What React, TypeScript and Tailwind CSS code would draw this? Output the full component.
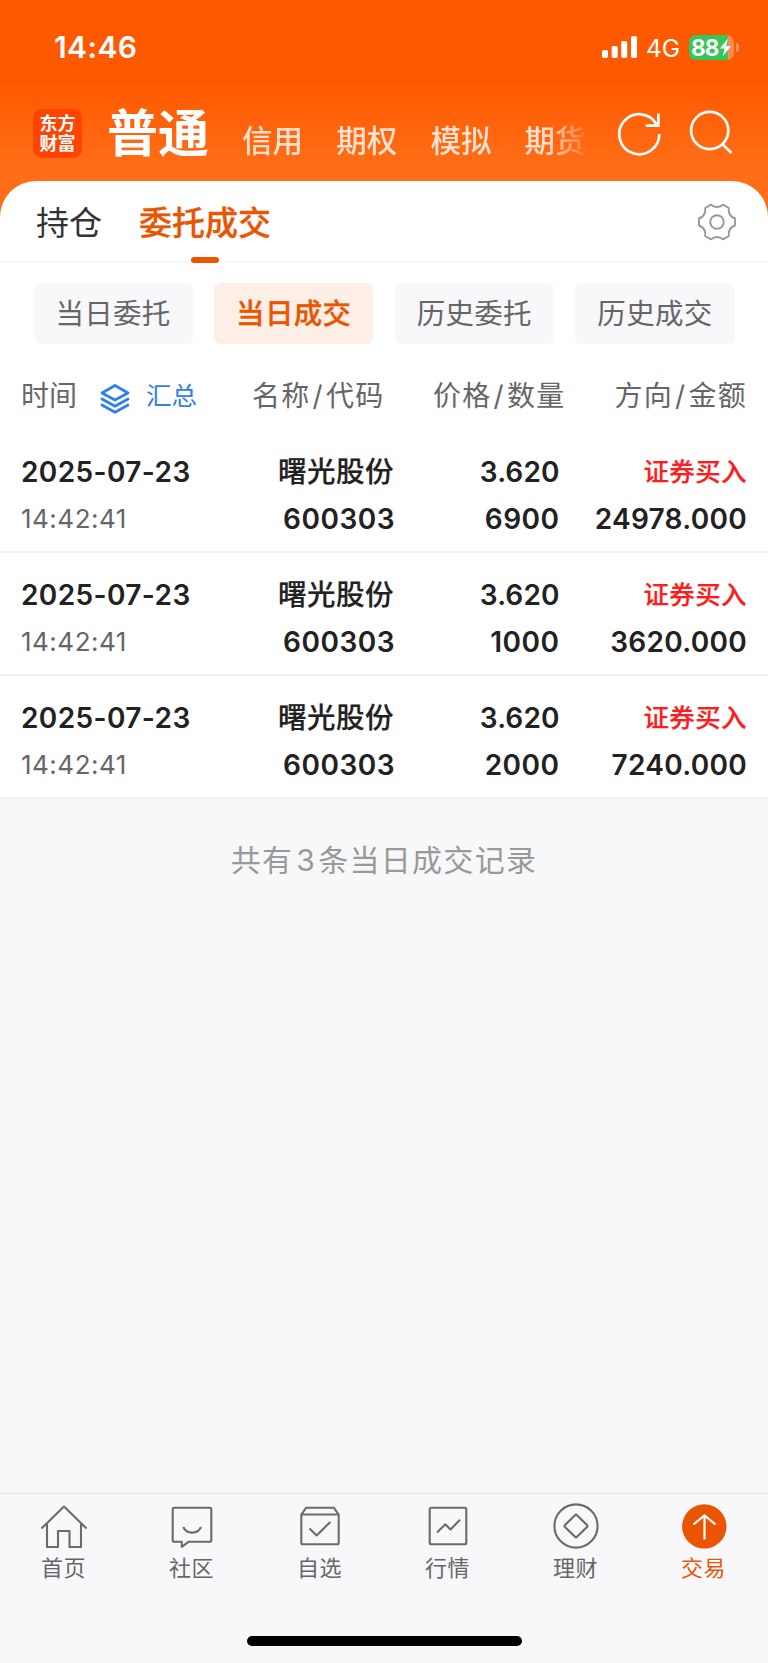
import React from 'react';
import clsx from 'clsx';

interface Trade {
  date: string;
  time: string;
  name: string;
  code: string;
  price: string;
  quantity: string;
  side: string;
  amount: string;
}

const accounts = ['信用', '期权', '模拟', '期货'];

const filters = ['当日委托', '当日成交', '历史委托', '历史成交'];

const columns = [
  ['名称', '代码'],
  ['价格', '数量'],
  ['方向', '金额'],
];

const trades: Trade[] = [
  { date: '2025-07-23', time: '14:42:41', name: '曙光股份', code: '600303', price: '3.620', quantity: '6900', side: '证券买入', amount: '24978.000' },
  { date: '2025-07-23', time: '14:42:41', name: '曙光股份', code: '600303', price: '3.620', quantity: '1000', side: '证券买入', amount: '3620.000' },
  { date: '2025-07-23', time: '14:42:41', name: '曙光股份', code: '600303', price: '3.620', quantity: '2000', side: '证券买入', amount: '7240.000' },
];

const StatusBar: React.FC = () => (
  <div className="flex h-[95px] items-start justify-between pt-[29px] pr-[29px] pl-[54px] text-white">
    <span className="text-[30px] leading-[36px] font-semibold tracking-[0.4px]">14:46</span>
    <div className="flex h-[36px] items-center">
      <svg className="h-[22px] w-[35px]" viewBox="0 0 35 22" fill="currentColor">
        <rect x="0" y="14" width="6" height="8" rx="1.8" />
        <rect x="9.7" y="10" width="6" height="12" rx="1.8" />
        <rect x="19.2" y="5" width="6" height="17" rx="1.8" />
        <rect x="29" y="0" width="6" height="22" rx="1.8" />
      </svg>
      <span className="ml-[9px] w-[43px] pt-[3px] text-[24.5px] leading-[33px]">4G</span>
      <div className="relative h-[25px] w-[45px]">
        <div className="h-full w-full rounded-[7px] bg-[linear-gradient(to_right,#34c759_39px,#ff8a4d_39px)]" />
        <span className="absolute top-[-1px] left-[2px] text-[22.5px] leading-[27px] font-bold tracking-[-1px]">88</span>
        <svg className="absolute top-[3px] left-[30px] h-[19px] w-[13px]" viewBox="0 0 13 19" fill="currentColor">
          <path d="M9 0.5L0.8 10.6h4.7L3.8 18.5L12.2 8H7.3z" />
        </svg>
      </div>
      <div className="ml-[2px] h-[9px] w-[3px] rounded-r-full bg-white/35" />
    </div>
  </div>
);

const AccountBar: React.FC = () => (
  <div className="flex h-[85px] items-start pl-[33px] text-white">
    <div className="mt-[14px] flex h-[49px] w-[49px] flex-col items-center justify-center rounded-[9px] bg-[#ff4400] text-[18px] leading-[20px] font-bold">
      <span>东方</span>
      <span>财富</span>
    </div>
    <span className="ml-[25px] text-[51px] leading-[77px] font-bold">普通</span>
    <div className="relative mt-[26px] ml-[33px] flex w-[350px] gap-[33.2px] overflow-hidden text-[30.5px] leading-[40px] font-medium whitespace-nowrap text-white/80 [mask-image:linear-gradient(to_right,#000_304px,transparent_350px)]">
      {accounts.map((name) => (
        <span key={name}>{name}</span>
      ))}
    </div>
    <svg className="mt-[14px] ml-[25px] h-[48px] w-[44px]" viewBox="617 109 44 48" fill="none" stroke="currentColor" strokeWidth="2.7">
      <path d="M659.3 134A20 20 0 1 1 656.6 124.2" />
      <path d="M658.4 113.5V125.6H645.7" />
    </svg>
    <svg className="mt-[14px] ml-[28px] h-[48px] w-[46px]" viewBox="689 109 46 48" fill="none" stroke="currentColor" strokeWidth="2.7">
      <circle cx="709.7" cy="130.5" r="18.6" />
      <path d="M722.5 144.2L731.5 153" />
    </svg>
  </div>
);

const SectionTabs: React.FC = () => (
  <div className="flex h-[82.5px] items-start border-b-2 border-[#f7f8fa] pl-[36px] text-[33px] leading-[84px]">
    <span className="text-[#333333]">持仓</span>
    <div className="relative ml-[37px] h-[82px] font-medium text-[#ea5504] [-webkit-text-stroke:0.3px_#ea5504]">
      委托成交
      <div className="absolute bottom-0 left-[52px] h-[6px] w-[28px] rounded-[3px] bg-[#ea5504]" />
    </div>
    <svg className="mt-[21px] ml-auto mr-[31.5px] h-[40px] w-[40px]" viewBox="-20 -20 40 40" fill="none" stroke="#999999" strokeWidth="1.9" strokeLinejoin="round">
      <path d="M-6 -17.3Q0 -12.5 6 -17.3L11.8 -14Q10.8 -6.3 18 -3.5V3.5Q10.8 6.3 11.8 14L6 17.3Q0 12.5 -6 17.3L-11.8 14Q-10.8 6.3 -18 3.5V-3.5Q-10.8 -6.3 -11.8 -14Z" />
      <circle r="6.8" />
    </svg>
  </div>
);

const ColumnHeader: React.FC = () => (
  <div className="grid h-[86px] grid-cols-[179px_184.5px_181px_181.5px] pt-[10px] pl-[21px] text-[28px] leading-[84px] text-[#666666]">
    <div className="flex items-start">
      <span>时间</span>
      <svg className="mt-[29px] ml-[22px] h-[32px] w-[32px] shrink-0" viewBox="0 0 32 32" fill="none" stroke="#2f80ed" strokeWidth="2.8" strokeLinejoin="round" strokeLinecap="round">
        <path d="M16 2.5L29 10L16 17L3 10Z" />
        <path d="M3 16L16 23.2L29 16" />
        <path d="M3 22L16 29.2L29 22" />
      </svg>
      <span className="ml-[15px] text-[25.5px] whitespace-nowrap text-[#2f80ed]">汇总</span>
    </div>
    {columns.map(([top, bottom]) => (
      <span key={top} className="text-right tracking-[1.3px]">
        {top}
        <span className="mx-[2px]">/</span>
        {bottom}
      </span>
    ))}
  </div>
);

const TradeRow: React.FC<{ trade: Trade }> = ({ trade }) => (
  <div className="grid h-[123px] grid-cols-[177px_197px_164.5px_187.5px] grid-rows-[47px_47px] border-b-2 border-[#f3f3f5] pt-[18.5px] pl-[21px] text-right text-[28px] leading-[47px] font-semibold tracking-[0.5px] text-[#222222]">
    <span className="text-left whitespace-nowrap tracking-[0.4px]">{trade.date}</span>
    <span className="pr-px text-[28.5px] leading-[46px] font-medium [-webkit-text-stroke:0.2px_#222222]">{trade.name}</span>
    <span className="tracking-[0.1px]">{trade.price}</span>
    <span className="text-[25.5px] leading-[45px] font-medium tracking-[0.4px] text-[#fa1e1e] [-webkit-text-stroke:0.2px_#fa1e1e]">{trade.side}</span>
    <span className="text-left text-[26px] leading-[46px] font-normal tracking-[0.5px] text-[#666666]">{trade.time}</span>
    <span>{trade.code}</span>
    <span>{trade.quantity}</span>
    <span className="tracking-[0.3px]">{trade.amount}</span>
  </div>
);

const tabs = [
  {
    label: '首页',
    icon: (
      <>
        <path d="M1.5 24.5L24 2.5L46.5 24.5" />
        <path d="M7 20V43H18V27H29.5V43H41V20" />
      </>
    ),
  },
  {
    label: '社区',
    icon: (
      <>
        <path d="M6 3.7H42Q43.3 3.7 43.3 5V36.5Q43.3 37.8 42 37.8H20.5L13.8 42.8V37.8H6Q4.7 37.8 4.7 36.5V5Q4.7 3.7 6 3.7Z" />
        <path d="M15.3 23C18.5 30.5 29.8 30.5 33 23" />
      </>
    ),
  },
  {
    label: '自选',
    icon: (
      <>
        <path d="M5.3 10.5L10.3 3.7H37.7L42.7 10.5V38.7Q42.7 40.3 41 40.3H7Q5.3 40.3 5.3 38.7Z" />
        <path d="M5.3 10.5H42.7" />
        <path d="M13.5 24.5L20.6 31.5L34.3 18" />
      </>
    ),
  },
  {
    label: '行情',
    icon: (
      <>
        <rect x="5.7" y="3.7" width="36.6" height="36.6" rx="1.5" />
        <path d="M13 28.5L21.3 20.3L26.5 25.5L36 15.7" />
      </>
    ),
  },
  {
    label: '理财',
    icon: (
      <>
        <circle cx="24" cy="22" r="21.6" />
        <path d="M23 11.2Q24 10.2 25 11.2L35 21Q36 22 35 23L25 32.8Q24 33.8 23 32.8L13 23Q12 22 13 21Z" />
      </>
    ),
  },
  {
    label: '交易',
    icon: (
      <>
        <circle cx="24.3" cy="22.4" r="22.2" fill="#ea5504" stroke="none" />
        <path d="M24.5 35.5V11.5M13.5 20.5L24.5 11.3L35.5 20.5" stroke="#ffffff" strokeWidth="2.2" />
      </>
    ),
  },
];

const TabBar: React.FC = () => (
  <nav className="h-[170px] border-t border-[#dfe0e2] bg-[#f8f8fb]">
    <div className="grid h-[142px] grid-cols-6">
      {tabs.map((tab) => (
        <div
          key={tab.label}
          className={clsx('flex flex-col items-center pt-[9.5px]', tab.label === '交易' ? 'text-[#ea5504]' : 'text-[#666666]')}
        >
          <svg className="h-[46px] w-[48px] overflow-visible" viewBox="0 0 48 46" fill="none" stroke="#6b6b6b" strokeWidth="2.1" strokeLinejoin="round">
            {tab.icon}
          </svg>
          <span className="pr-px text-[22px] leading-[37px] tracking-[0.6px]">{tab.label}</span>
        </div>
      ))}
    </div>
    <div className="mx-auto h-[10px] w-[275px] rounded-full bg-black" />
  </nav>
);

const App: React.FC = () => {
  return (
    <div className="flex h-[1663px] w-[768px] flex-col overflow-hidden bg-[#f7f8fa] font-['Inter','Noto_Sans_CJK_SC',sans-serif]">
      <header className="h-[230px] shrink-0 bg-[linear-gradient(to_bottom,#ff5900_0px,#ff5900_80px,#ff6d17_165px)]">
        <StatusBar />
        <AccountBar />
      </header>

      <main className="z-10 -mt-[49.5px] flex flex-1 flex-col">
        <div className="rounded-t-[36px] bg-white">
          <SectionTabs />
          <div className="grid h-[81px] grid-cols-4 gap-[21.5px] px-[33.5px] pt-[20px]">
            {filters.map((filter) => (
              <div
                key={filter}
                className={clsx(
                  'h-[61px] rounded-[7px] text-center text-[28.5px] leading-[61px] tracking-[0.3px]',
                  filter === '当日成交'
                    ? 'bg-[#fdeee6] font-medium text-[#ea5504] [-webkit-text-stroke:0.3px_#ea5504]'
                    : 'bg-[#f8f8fb] text-[#666666]'
                )}
              >
                {filter}
              </div>
            ))}
          </div>
          <ColumnHeader />
          {trades.map((trade) => (
            <TradeRow key={trade.quantity} trade={trade} />
          ))}
        </div>
        <p className="pt-[37px] text-center text-[30px] leading-[48px] tracking-[1.3px] text-[#999999]">
          共有<span className="mr-[2px] ml-[3px]">3</span>条当日成交记录
        </p>
      </main>

      <TabBar />
    </div>
  );
};

export default App;
